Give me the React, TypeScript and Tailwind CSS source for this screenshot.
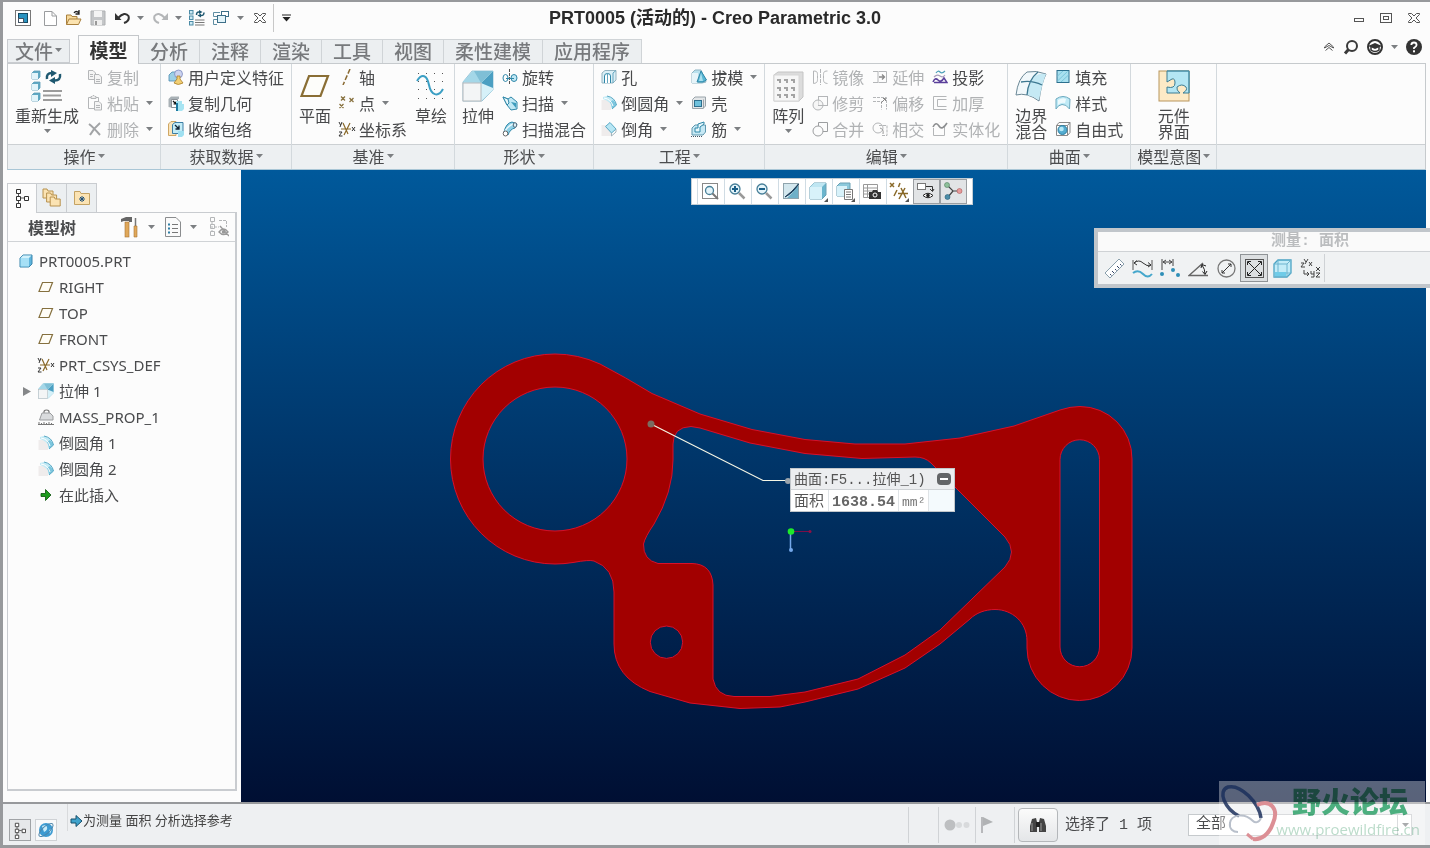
import React from "react";
import type { ReactNode } from "react";

/* ---------- primitives ---------- */

function Ico({ w = 16, h, box, children }: { w?: number; h?: number; box?: string; children: ReactNode }) {
  const height = h ?? w;
  return (
    <svg width={w} height={height} viewBox={box ?? `0 0 ${w} ${height}`} fill="none" className="shrink-0" aria-hidden="true">
      {children}
    </svg>
  );
}

function Caret({ dark = false }: { dark?: boolean }) {
  return (
    <Ico w={7} h={4}>
      <path d="M0 0H7L3.5 4Z" fill={dark ? "#222" : "#7c7f82"} />
    </Ico>
  );
}

/* ---------- icons ---------- */

const g = "#b4b6b8";
const teal = "#2f87a8";
const sky = "#bfe8f5";

const CopyIcon = (
  <Ico>
    <path d="M1.500 1.500H6L8.500 4V10.500H1.500Z" fill="#f4f4f4" stroke={g} />
    <path d="M7.500 5.500H12L14.500 8V14.500H7.500Z" fill="#f4f4f4" stroke={g} />
    <path d="M3 5.500H6M3 7.500H6M9 10.500H13M9 12.500H13" stroke={g} />
  </Ico>
);
const PasteIcon = (
  <Ico>
    <path d="M4 2.500H1.500V13.500H7M9 2.500H11.500V6" stroke={g} />
    <path d="M4 3.500V1.500H5L6 0.500H7L8 1.500H9V3.500Z" fill="#eee" stroke={g} />
    <path d="M7.500 6.500H12L14.500 9V15H7.500Z" fill="#f4f4f4" stroke={g} />
    <path d="M9 10.500H13M9 12.500H13" stroke={g} />
  </Ico>
);
const DeleteIcon = (
  <Ico>
    <path d="M2 3Q6 6 13 14M13 2Q7 7 3 14" stroke="#a2a4a6" strokeWidth="2" />
  </Ico>
);
const UserFeatureIcon = (
  <Ico>
    <path d="M1 6L4 3H10V10L7 12H1Z" fill="#9cd0e6" stroke="#4b8bb0" strokeWidth="0.8" />
    <circle cx="10.500" cy="5" r="4" fill="#ccd3ef" stroke="#7d8cc0" strokeWidth="0.8" />
    <path d="M9 7H12V10L15 14Q10 17 6 14L9 10Z" fill="#f2cf74" stroke="#a97f2a" strokeWidth="0.8" />
  </Ico>
);
const CopyGeomIcon = (
  <Ico>
    <path d="M0.500 4L3 1.500H11V4H5V13L0.500 12Z" fill="#a9b1b6" />
    <path d="M3.500 4.500H9.500V12.500H3.500Z" fill="#fff" stroke="#8b9196" />
    <path d="M5 6L8 9M8 6.500V9H5.500" stroke="#111" strokeWidth="1.200" />
    <path d="M8 6H14V9H16V14L14 16H8Z" fill="#a7e4f2" />
    <path d="M8 8H10V16H8Z" fill="#1e7aa0" />
  </Ico>
);
const ShrinkwrapIcon = (
  <Ico>
    <path d="M0.500 3L3 0.500H8V14.500H0.500Z" fill="#f9e4bb" stroke="#cfa764" />
    <path d="M4.500 3.500L7 1.500H15V10L12.500 12.500H4.500Z" fill="#c3ecf7" stroke="#3c7fa5" />
    <path d="M7 4L11 8M11 4.500V8H7.500" stroke="#123" strokeWidth="1.300" />
    <path d="M10 10H16V14L14 16H10Z" fill="#9fe0f1" />
  </Ico>
);
const AxisIcon = (
  <Ico>
    <path d="M11 0L4 16" stroke="#8a6a33" strokeWidth="1.500" strokeDasharray="5 2" />
  </Ico>
);
const PointIcon = (
  <Ico>
    <path d="M2 1.500L6 5.500M6 1.500L2 5.500M10.500 3L14.500 7M14.500 3L10.500 7M0.500 9L4.500 13M4.500 9L0.500 13" stroke="#8a7442" strokeWidth="1.300" />
  </Ico>
);
const CsysIcon = (
  <Ico w={18} h={16}>
    <path d="M5 2L10 13M12 2L6 14M3 8H13" stroke="#8a6a2a" strokeWidth="1.200" />
    <path d="M1 1L2.500 4M4 1L2 6M1 11H4L1 15H4.500M14 6L17 10M17 6L14 10" stroke="#333" />
  </Ico>
);
const RevolveIcon = (
  <Ico>
    <ellipse cx="3.500" cy="9" rx="2.500" ry="3.500" stroke={teal} />
    <ellipse cx="12" cy="9" rx="3" ry="3.500" fill={sky} stroke={teal} />
    <path d="M7.500 0V16" stroke="#555" strokeDasharray="3 1" />
    <path d="M4 9.500H12" stroke={teal} />
  </Ico>
);
const SweepIcon = (
  <Ico>
    <path d="M1 2L6 4L9 2L15 7V14L9 15L5 10Z" fill={sky} stroke={teal} />
    <path d="M1 2L6 4L7 8L5 10Z" fill="#e9f8fc" stroke={teal} />
    <path d="M9 7L14 8V13Z" fill="#3c9cbc" />
  </Ico>
);
const SweptBlendIcon = (
  <Ico>
    <path d="M2 11Q4 2 10 1L15 3L13 7Q8 8 6 14Z" fill="#8fd0e6" stroke={teal} />
    <path d="M3 10Q6 5 11 3" stroke="#e8f8fd" strokeWidth="1.500" />
    <ellipse cx="3.500" cy="12.500" rx="2.300" ry="2.500" fill="#fff" stroke="#666" />
    <ellipse cx="13" cy="4" rx="1.800" ry="2.300" fill="#d9f1f8" stroke="#567" />
  </Ico>
);
const HoleIcon = (
  <Ico>
    <path d="M1 4L4 1.500H15V11L12 14H1Z" fill="#dbeff6" stroke="#94b3c0" />
    <path d="M3.500 14V7Q3.500 4.500 6.500 4.500Q9.500 4.500 9.500 7V14" fill="#fff" stroke={teal} />
    <path d="M6.500 5V14M12 4V14M12 4L15 1.500" stroke="#62a5bf" />
  </Ico>
);
const RoundIcon = (
  <Ico>
    <path d="M0.500 5H8L10 9V15H0.500Z" fill="#efecec" />
    <path d="M2 2L6 1Q14 3 15.500 10L11 14Q10 6 2 4Z" fill="#c2eaf5" />
    <path d="M12 5Q15 8 15.500 10L11 14Q11 10 9 7Z" fill="#7cc6de" />
    <path d="M6 1Q14 2.500 15.500 10L11 14" stroke="#5aa9c5" />
    <path d="M3 3Q10 4 12 11" stroke="#fff" />
  </Ico>
);
const ChamferIcon = (
  <Ico>
    <path d="M0.500 4H7L10 9V15H0.500Z" fill="#efecec" />
    <path d="M4.500 5.500L9 1.500L15 8L10.500 12Z" fill="#b7e6f4" stroke="#5aa9c5" />
    <path d="M10.500 12V15L15 11V8" stroke="#a3b4bc" />
  </Ico>
);
const DraftIcon = (
  <Ico>
    <path d="M1 4L4 1H10L15 13L11 14H1Z" fill="#b9e1ee" stroke="#8fb5c4" />
    <path d="M1 4H7V14H1Z" fill="#e6f4f9" />
    <path d="M10 2L6 13H12L15.500 11Z" fill="#59b6d3" stroke={teal} />
    <path d="M10 4L8 12H12Z" fill="#a9e0ef" />
  </Ico>
);
const ShellIcon = (
  <Ico>
    <path d="M1.500 4.500L4 2H14.500V11L12 13.500H1.500Z" fill="#e3e6e8" stroke="#9aa4aa" />
    <rect x="3.500" y="5.500" width="7" height="6" fill="#6fc1dc" stroke="#2e6f8e" />
    <path d="M12.500 4.500V13.500" stroke="#9aa4aa" />
  </Ico>
);
const RibIcon = (
  <Ico>
    <path d="M1 7L4 4H14.500V11L12 14H1Z" fill="#c6e8f4" stroke="#5f97ae" />
    <path d="M4 7V11H9V6L13 3V1L7 3V7Z" fill="#e6f7fc" stroke={teal} />
    <path d="M0 15.500H12" stroke="#456" strokeDasharray="1 1" />
  </Ico>
);
const MirrorIcon = (
  <Ico>
    <path d="M8.500 0V16" stroke={g} strokeDasharray="4 1" />
    <path d="M1.500 2C6 2 5.500 4 5.500 8S6 14 1.500 14.500ZM15.500 2C11 2 11.500 4 11.500 8S11 14 15.500 14.500" stroke={g} />
  </Ico>
);
const ExtendIcon = (
  <Ico>
    <path d="M1 2.500H6V13.500H1M6.500 2.500H14.500V13.500H6.500" stroke={g} />
    <path d="M7 8H12M10 5.500L12.500 8L10 10.500" stroke="#888" strokeWidth="1.300" />
  </Ico>
);
const ProjectIcon = (
  <Ico>
    <path d="M4 4Q6 1 8 3T13 2" stroke="#4d9fb8" strokeWidth="1.200" />
    <path d="M2 8Q5 5 8 7T13 6" stroke="#a79dbb" strokeWidth="1.200" />
    <path d="M1 13Q3 8 6 11T12 9L15 13.500H2" stroke="#5a3f9a" strokeWidth="1.500" />
  </Ico>
);
const TrimIcon = (
  <Ico>
    <rect x="6.500" y="1.500" width="9" height="9" stroke={g} />
    <circle cx="6" cy="10" r="5" stroke={g} fill="#f2f2f2" fillOpacity="0.6" />
    <path d="M6 10.500H11" stroke={g} />
  </Ico>
);
const MergeIcon = (
  <Ico>
    <path d="M6.500 5V1.500H15.500V10.500H11" stroke="#9c9ea0" />
    <circle cx="6" cy="10" r="5" stroke="#9c9ea0" />
  </Ico>
);
const OffsetIcon = (
  <Ico>
    <path d="M1 2.500H14.500V14.500M1 6.500H9.500V14.500" stroke={g} strokeDasharray="3 1" />
    <path d="M9 8L13 4M11 3.500H13.500V6" stroke="#888" />
  </Ico>
);
const ThickenIcon = (
  <Ico>
    <path d="M14.500 1.500H1.500V14.500H14.500M14.500 4.500H5.500V11.500H14.500" stroke={g} />
  </Ico>
);
const IntersectIcon = (
  <Ico>
    <circle cx="6" cy="7" r="5" stroke={g} />
    <path d="M7 4.500H15V14.500H10" stroke={g} strokeDasharray="3 1" />
    <path d="M8 7Q12 8 11 13" stroke="#999" />
  </Ico>
);
const SolidifyIcon = (
  <Ico>
    <path d="M1.500 7V14.500H12.500V6" stroke={g} />
    <path d="M1 6Q4 0 7 5T15 2" stroke="#8c8e90" strokeWidth="1.600" />
  </Ico>
);
const FillIcon = (
  <Ico>
    <rect x="2" y="1.500" width="12" height="12" fill="#a8e0ef" stroke="#2b6f8e" />
    <path d="M2.500 7L8 2M2.500 12L12.500 2.500M6 13L13.500 6" stroke="#7bc6dc" />
  </Ico>
);
const StyleIcon = (
  <Ico>
    <path d="M1 4Q8 -1 15 4L14.500 14Q11 9 7 9.500Q3 10 1 14Z" fill="#bfeaf6" stroke="#6aa9bf" />
    <path d="M3 5Q8 2 11 4L10 8Q6 7 3 10Z" fill="#edfafd" />
  </Ico>
);
const FreestyleIcon = (
  <Ico>
    <path d="M1.500 4.500L4 1.500H15V11.500L12.500 14.500H1.500ZM1.500 4.500H12.500V14.500M12.500 4.500L15 1.500" stroke="#888" />
    <circle cx="7.500" cy="9" r="4.500" fill="#54acd0" stroke="#2b7fa2" />
    <circle cx="6.500" cy="8" r="2.300" fill="#b6e8f6" />
  </Ico>
);
const RegenIcon = (
  <Ico w={32}>
    {[1, 12, 23].map((y) => (
      <g key={y}>
        <path d={`M1 ${y + 2}L3 ${y}H9V${y + 6}L7 ${y + 8}H1Z`} fill="#5fa9c4" stroke="#5b9cb6" strokeWidth="0.8" />
        <path d={`M1 ${y + 2}H7V${y + 8}H1Z`} fill="#e2f4fa" />
      </g>
    ))}
    <path d="M16 9Q15 3 21 3" stroke="#1e5870" strokeWidth="2.500" />
    <path d="M20 0L26 3L20 7Z" fill="#1e5870" />
    <path d="M29 4Q30 11 23 10.500" stroke="#1e5870" strokeWidth="2.500" />
    <path d="M24 7L18 10.500L24 14Z" fill="#1e5870" />
    <path d="M12 21H31M12 25.500H30M12 30H31" stroke="#9b9b9b" strokeWidth="2" />
  </Ico>
);
const PlaneIcon = (
  <Ico w={32}>
    <path d="M10 6H29L21.500 26H2.500Z" stroke="#8a6e35" strokeWidth="2.200" fill="#fdfdfa" />
  </Ico>
);
const SketchIcon = (
  <Ico w={32}>
    {[3, 11, 19, 28].map((y) =>
      [3, 11, 19, 27].map((x) => <rect key={`${x}-${y}`} x={x} y={y} width="1" height="1" fill="#555" />),
    )}
    <path d="M2 11C7 3 12 5 14 15S23 28 28 19" stroke="#3b9fc4" strokeWidth="2" />
  </Ico>
);
const extrudeArt = (
  <>
    <path d="M1 12L10 1H31V20L20 31H1Z" fill="#bfe3f0" stroke="#8abdd0" strokeWidth="0.8" />
    <path d="M19 13L31 1V20L19 31Z" fill="#d6f1f9" />
    <path d="M31 1V18L19 13Z" fill="#4b9fc2" />
    <path d="M1 12L11 1H31L19 13Z" fill="#a4d7e8" />
    <path d="M12 1H31L19 13Z" fill="#7fbfd6" />
    <rect x="1" y="13" width="18" height="18" fill="#f3f5f6" stroke="#b3b8bb" />
  </>
);
const ExtrudeIcon = <Ico w={32}>{extrudeArt}</Ico>;
const ExtrudeSmall = (
  <Ico w={16} box="0 0 32 32">
    {extrudeArt}
  </Ico>
);
const PatternIcon = (
  <Ico w={32}>
    <path d="M2 5L6 2H31V27L27 31H2Z" fill="#dcdcdc" stroke="#c4c4c4" />
    <rect x="2" y="5" width="25" height="26" fill="#f6f6f6" stroke="#d6d6d6" />
    {[9, 17, 24].map((y) =>
      [5, 12, 19].map((x) => <path key={`${x}-${y}`} d={`M${x} ${y}h4v4h-2v-2h-2z`} fill="#a3a3a3" />),
    )}
  </Ico>
);
const BoundaryIcon = (
  <Ico w={32}>
    <path d="M12 2Q21 0 31 4Q26 14 24 31Q12 22 1 25Q3 8 12 2Z" fill="#f1f8fb" stroke="#6b8896" />
    <path d="M20 6Q25 3 31 4Q27 14 24 30Q18 26 12 25Q14 17 15 12Z" fill="#c5e9f4" />
    <path d="M23 2Q13 10 12 25M6 12Q17 10 27 15" stroke="#3c7790" strokeWidth="1.300" />
  </Ico>
);
const ComponentUiIcon = (
  <Ico w={32}>
    <rect x="1" y="1" width="30" height="30" fill="#fdeac6" stroke="#b8955c" />
    <path d="M9 1H31V23H25Q30 20 28 17Q24 13 19 17Q18 20 22 23H9V17Q17 19 17 13Q17 8 14 9L9 12V8Z" fill="#b4e6f3" stroke="#3c7c92" />
    <path d="M9 1H31V23" stroke="#4a94ad" />
  </Ico>
);

/* ---------- ribbon ---------- */

type Item = { icon: ReactNode; label: string; off?: boolean; drop?: boolean };

function SmallButton({ icon, label, off, drop }: Item) {
  return (
    <button type="button" disabled={off} className={`flex h-[26px] items-center gap-1 whitespace-nowrap ${off ? "text-[#b0b2b4]" : "text-[#48494b]"}`}>
      <span className="flex w-4 justify-center">{icon}</span>
      <span>{label}</span>
      {drop && (
        <span className="ml-[3px] flex">
          <Caret />
        </span>
      )}
    </button>
  );
}

function Column({ items }: { items: Item[] }) {
  return (
    <div className="flex flex-col items-start">
      {items.map((i) => (
        <SmallButton key={i.label} {...i} />
      ))}
    </div>
  );
}

function BigButton({ icon, lines, drop }: { icon: ReactNode; lines: string[]; drop?: boolean }) {
  return (
    <button type="button" className="flex flex-col items-center self-start pt-[6px] leading-4 whitespace-nowrap text-[#48494b]">
      {icon}
      <span className="mt-[5px] flex flex-col">
        {lines.map((l) => (
          <span key={l}>{l}</span>
        ))}
      </span>
      {drop && (
        <span className="mt-[6px]">
          <Caret />
        </span>
      )}
    </button>
  );
}

function Group({ label, children }: { label: string; children: ReactNode }) {
  return (
    <section className="flex flex-col border-r border-[#d3d9dd]">
      <div className="flex h-20 justify-center gap-2 px-[7px]">{children}</div>
      <button type="button" className="flex h-[25px] items-center justify-center gap-[2px] border-t border-[#ccd0d3] bg-[#edf0f2] px-[6px] pb-[2px] whitespace-nowrap text-[#4c4d4f]">
        {label}
        <Caret />
      </button>
    </section>
  );
}

const tabs = ["分析", "注释", "渲染", "工具", "视图", "柔性建模", "应用程序"];

function TabBar() {
  return (
    <nav className="flex h-[29px] items-end pl-1 text-[19px] leading-none">
      <button type="button" className="flex h-[24px] w-[63px] items-center justify-center gap-[2px] border border-[#c9ccd0] bg-[#eceff1] pb-[2px] font-medium text-[#77797c]">
        文件
        <Caret />
      </button>
      <button type="button" className="relative -mb-px ml-2 h-[29px] w-[61px] border border-b-0 border-[#c4c7ca] bg-[#fcfcfc] pb-[2px] font-bold text-[#333]">
        模型
      </button>
      {tabs.map((t) => (
        <button key={t} type="button" className="h-[24px] border-t border-r border-[#d0d4d7] bg-[#eceff1] px-[11px] pb-[2px] font-medium whitespace-nowrap text-[#77797c]">
          {t}
        </button>
      ))}
      <div className="ml-auto flex h-full items-center gap-2 pr-2 pb-1">
        <button type="button" aria-label="最小化功能区">
          <Ico w={12} h={10}>
            <path d="M1.500 5L6 1L10.500 5V6L6 3.500L1.500 6ZM2.500 8.500L6 5.500L9.500 8.500" stroke="#555" />
          </Ico>
        </button>
        <button type="button" aria-label="搜索">
          <Ico w={16}>
            <circle cx="9" cy="7" r="5" stroke="#3a3a3a" strokeWidth="2" />
            <path d="M5.500 10.500L2 14.500" stroke="#3a3a3a" strokeWidth="3" />
          </Ico>
        </button>
        <button type="button" aria-label="学习" className="flex items-center gap-2">
          <Ico w={16}>
            <circle cx="8" cy="8" r="7" fill="#fff" stroke="#333" strokeWidth="2" />
            <path d="M1 7L8 4L15 7L8 10Z" fill="#333" />
            <path d="M4 8V11Q8 14 12 11V8" stroke="#333" strokeWidth="1.500" />
          </Ico>
          <Caret />
        </button>
        <button type="button" aria-label="帮助">
          <Ico w={16}>
            <circle cx="8" cy="8" r="8" fill="#333" />
            <path d="M5.300 6Q5.500 3.500 8 3.500T10.600 6Q10.600 7.300 8 9V10" stroke="#fff" strokeWidth="1.800" />
            <rect x="7" y="11.300" width="2" height="2" fill="#fff" />
          </Ico>
        </button>
      </div>
    </nav>
  );
}

function TitleBar() {
  return (
    <header className="grid h-8 grid-cols-[1fr_auto_1fr] items-center">
      <div className="flex items-center pl-3">
        <button type="button" aria-label="窗口">
          <Ico w={16}>
            <rect x="0.500" y="0.500" width="15" height="15" fill="#fff" stroke="#777" />
            <rect x="3.500" y="3.500" width="9" height="9" fill="#2a93c0" stroke="#164a63" />
            <rect x="3.500" y="8.500" width="5" height="4" fill="#fff" stroke="#456" />
          </Ico>
        </button>
        <button type="button" aria-label="新建" className="ml-3">
          <Ico w={15} h={17}>
            <path d="M1.500 1.500H9L13.500 6V15.500H1.500Z" fill="#fff" stroke="#9a9c9e" />
            <path d="M9 1.500V6H13.500" stroke="#9a9c9e" />
          </Ico>
        </button>
        <button type="button" aria-label="打开" className="ml-[7px]">
          <Ico w={17} h={16}>
            <path d="M1.500 14.500V5H6L7 6.500H12V9" fill="#f7d99b" stroke="#a9803d" />
            <path d="M1.500 14.500L4 9H16L13.500 14.500Z" fill="#fbe3b0" stroke="#a9803d" />
            <path d="M9 3Q11 0 14 3M14 0V4H10.500" stroke="#222" strokeWidth="1.300" />
          </Ico>
        </button>
        <button type="button" aria-label="保存" className="ml-2" disabled>
          <Ico w={16}>
            <path d="M1 1H15V15H1Z" fill="#c4c6c8" stroke="#aeb0b2" />
            <rect x="4" y="1" width="8" height="6" fill="#f4f4f4" />
            <rect x="4" y="10" width="8" height="5" fill="#eee" />
            <rect x="5" y="11" width="2" height="4" fill="#999" />
          </Ico>
        </button>
        <button type="button" aria-label="撤销" className="ml-2 flex items-center gap-[6px]">
          <Ico w={17} h={14}>
            <path d="M4 7Q11 0 14.500 5Q16 10 10 12" stroke="#333" strokeWidth="2" />
            <path d="M1 2V9H7.500Z" fill="#333" />
          </Ico>
          <Caret />
        </button>
        <button type="button" aria-label="重做" className="ml-2 flex items-center gap-[6px]" disabled>
          <Ico w={17} h={14}>
            <path d="M13 7Q6 0 2.500 5Q1 10 7 12" stroke="#b4b6b8" strokeWidth="2" />
            <path d="M16 2V9H9.500Z" fill="#b4b6b8" />
          </Ico>
          <Caret />
        </button>
        <button type="button" aria-label="重新生成" className="ml-[7px]">
          <Ico w={16} box="0 0 32 32">
            {[1, 12, 23].map((y) => (
              <rect key={y} x="1" y={y} width="7" height="7" fill="#cdeaf4" stroke="#4b8ba6" strokeWidth="2" />
            ))}
            <path d="M15 10Q15 3 21 4M30 5Q30 12 23 11" stroke="#1e5870" strokeWidth="3" />
            <path d="M20 0L27 4L20 8ZM24 7L17 11L24 15Z" fill="#1e5870" />
            <path d="M12 20H31M12 25H31M12 30H31" stroke="#777" strokeWidth="2" />
          </Ico>
        </button>
        <button type="button" aria-label="窗口切换" className="ml-2 flex items-center gap-[8px]">
          <Ico w={16} h={15}>
            <path d="M7 1.500H0.500V5.500H5M4 13.500H0.500V8.500H4" stroke="#5e8ea3" />
            <rect x="8.500" y="0.500" width="7" height="5" fill="#fff" stroke="#3d6f88" />
            <rect x="4.500" y="4.500" width="8" height="7" fill="#e3f4fa" stroke="#3d6f88" />
          </Ico>
          <Caret />
        </button>
        <button type="button" aria-label="关闭" className="ml-[10px]">
          <CloseGlyph />
        </button>
        <span className="ml-[7px] h-7 w-px bg-[#c8c8c8]" />
        <button type="button" aria-label="自定义" className="ml-2">
          <Ico w={9} h={8}>
            <path d="M0 1H9" stroke="#222" />
            <path d="M0.500 3H8.500L4.500 7.500Z" fill="#222" />
          </Ico>
        </button>
      </div>
      <h1 className="pr-[3px] font-['Liberation_Sans','Noto_Sans_CJK_SC',sans-serif] text-[18px] leading-none font-bold text-[#2a2a2a]">
        PRT0005 (活动的) - Creo Parametric 3.0
      </h1>
      <div className="flex items-center justify-end gap-4 pr-[10px]">
        <button type="button" aria-label="最小化">
          <Ico w={10}>
            <rect x="0.500" y="5.500" width="9" height="3" stroke="#555" />
          </Ico>
        </button>
        <button type="button" aria-label="还原">
          <Ico w={12} h={10}>
            <rect x="0.500" y="0.500" width="11" height="9" stroke="#555" />
            <rect x="3.500" y="3.500" width="5" height="3" stroke="#555" />
          </Ico>
        </button>
        <button type="button" aria-label="关闭窗口">
          <CloseGlyph />
        </button>
      </div>
    </header>
  );
}

function CloseGlyph() {
  return (
    <Ico w={12} h={10}>
      <path d="M0.500 0.500H3.500L6 3L8.500 0.500H11.500V1.500L8 5L11.500 8.500V9.500H8.500L6 7L3.500 9.500H0.500V8.500L4 5L0.500 1.500Z" stroke="#555" />
    </Ico>
  );
}

function Ribbon() {
  return (
    <div className="mr-1 ml-1 flex border border-b-[#a9c6d6] border-[#c6cacd] text-[16px] leading-none">
      <Group label="操作">
        <BigButton icon={RegenIcon} lines={["重新生成"]} drop />
        <Column
          items={[
            { icon: CopyIcon, label: "复制", off: true },
            { icon: PasteIcon, label: "粘贴", off: true, drop: true },
            { icon: DeleteIcon, label: "删除", off: true, drop: true },
          ]}
        />
      </Group>
      <Group label="获取数据">
        <Column
          items={[
            { icon: UserFeatureIcon, label: "用户定义特征" },
            { icon: CopyGeomIcon, label: "复制几何" },
            { icon: ShrinkwrapIcon, label: "收缩包络" },
          ]}
        />
      </Group>
      <Group label="基准">
        <BigButton icon={PlaneIcon} lines={["平面"]} />
        <Column
          items={[
            { icon: AxisIcon, label: "轴" },
            { icon: PointIcon, label: "点", drop: true },
            { icon: CsysIcon, label: "坐标系" },
          ]}
        />
        <BigButton icon={SketchIcon} lines={["草绘"]} />
      </Group>
      <Group label="形状">
        <BigButton icon={ExtrudeIcon} lines={["拉伸"]} />
        <Column
          items={[
            { icon: RevolveIcon, label: "旋转" },
            { icon: SweepIcon, label: "扫描", drop: true },
            { icon: SweptBlendIcon, label: "扫描混合" },
          ]}
        />
      </Group>
      <Group label="工程">
        <Column
          items={[
            { icon: HoleIcon, label: "孔" },
            { icon: RoundIcon, label: "倒圆角", drop: true },
            { icon: ChamferIcon, label: "倒角", drop: true },
          ]}
        />
        <Column
          items={[
            { icon: DraftIcon, label: "拔模", drop: true },
            { icon: ShellIcon, label: "壳" },
            { icon: RibIcon, label: "筋", drop: true },
          ]}
        />
      </Group>
      <Group label="编辑">
        <BigButton icon={PatternIcon} lines={["阵列"]} drop />
        <Column
          items={[
            { icon: MirrorIcon, label: "镜像", off: true },
            { icon: TrimIcon, label: "修剪", off: true },
            { icon: MergeIcon, label: "合并", off: true },
          ]}
        />
        <Column
          items={[
            { icon: ExtendIcon, label: "延伸", off: true },
            { icon: OffsetIcon, label: "偏移", off: true },
            { icon: IntersectIcon, label: "相交", off: true },
          ]}
        />
        <Column
          items={[
            { icon: ProjectIcon, label: "投影" },
            { icon: ThickenIcon, label: "加厚", off: true },
            { icon: SolidifyIcon, label: "实体化", off: true },
          ]}
        />
      </Group>
      <Group label="曲面">
        <BigButton icon={BoundaryIcon} lines={["边界", "混合"]} />
        <Column
          items={[
            { icon: FillIcon, label: "填充" },
            { icon: StyleIcon, label: "样式" },
            { icon: FreestyleIcon, label: "自由式" },
          ]}
        />
      </Group>
      <Group label="模型意图">
        <BigButton icon={ComponentUiIcon} lines={["元件", "界面"]} />
      </Group>
      <div className="flex flex-1 flex-col justify-end">
        <div className="h-[25px] border-t border-[#ccd0d3] bg-[#edf0f2]" />
      </div>
    </div>
  );
}

/* ---------- model tree ---------- */

const PlaneSmall = (
  <Ico w={16}>
    <path d="M4.500 3.500H14.500L11 12.500H1Z" stroke="#85703f" strokeWidth="1.200" fill="#fffdf6" />
  </Ico>
);
const PartIcon = (
  <Ico w={14}>
    <path d="M1 4L4 1H13V10L10 13H1Z" fill="#5fb4dc" stroke="#3b86ad" />
    <path d="M1.500 4H10V12.500H1.500Z" fill="#a6e0f6" />
    <path d="M1.500 4L4 1.500H12.500L10 4Z" fill="#d2f1fb" />
  </Ico>
);
const MassIcon = (
  <Ico w={16}>
    <path d="M6 4Q5.500 1 8.500 1T11 4" stroke="#777" strokeWidth="1.200" />
    <path d="M4 4H12L15 7V11H1.500Z" fill="#d9dbdd" stroke="#9a9c9e" />
    <path d="M1 15.500V13M3.500 15.500V14M6 15.500V13M8.500 15.500V14M11 15.500V13M13.500 15.500V14M0 15.500H16" stroke="#777" />
  </Ico>
);
const InsertIcon = (
  <Ico w={16}>
    <path d="M3 6.500H7.500V2.500L13 8L7.500 13.500V9.500H3Z" fill="#1d9b1d" stroke="#0d520d" strokeWidth="0.800" />
  </Ico>
);

const tree: { icon: ReactNode; label: string; open?: boolean }[] = [
  { icon: PlaneSmall, label: "RIGHT" },
  { icon: PlaneSmall, label: "TOP" },
  { icon: PlaneSmall, label: "FRONT" },
  { icon: CsysIcon, label: "PRT_CSYS_DEF" },
  { icon: ExtrudeSmall, label: "拉伸 1", open: true },
  { icon: MassIcon, label: "MASS_PROP_1" },
  { icon: RoundIcon, label: "倒圆角 1" },
  { icon: RoundIcon, label: "倒圆角 2" },
  { icon: InsertIcon, label: "在此插入" },
];

function TreeGlyph({ w = 14, h = 20 }: { w?: number; h?: number }) {
  return (
    <Ico w={w} h={h} box="0 0 14 20">
      <path d="M3.500 5V16M6 10H9" stroke="#555" />
      <path d="M1.500 1.500H5.500V5.500H1.500ZM1.500 8.500H5.500V12.500H1.500ZM1.500 15.500H5.500V19.500H1.500ZM9.500 8.500H13.500V12.500H9.500Z" fill="#fff" stroke="#333" />
    </Ico>
  );
}

function Sidebar() {
  return (
    <aside className="flex w-[238px] shrink-0 flex-col bg-[#fcfcfc] pt-[13px] pr-1 pb-[11px] pl-1">
      <div className="flex">
        <button type="button" aria-label="模型树" className="relative -mb-px flex h-[30px] w-[30px] items-center justify-center border border-b-0 border-[#c9ccd0] bg-[#fcfcfc] pb-[2px]">
          <TreeGlyph />
        </button>
        <button type="button" aria-label="文件夹浏览器" className="flex h-[29px] w-[30px] items-center justify-center border-t border-r border-[#c9ccd0] bg-[#eceff1]">
          <Ico w={20}>
            {[0, 4, 8].map((o) => (
              <path key={o} d={`M${o * 0.9 + 1} ${o + 10}V${o + 1}H${o * 0.9 + 5}L${o * 0.9 + 6} ${o + 3}H${o * 0.9 + 11}V${o + 10}Z`} fill="#fbe3b3" stroke="#b8924f" />
            ))}
          </Ico>
        </button>
        <button type="button" aria-label="收藏夹" className="flex h-[29px] w-[30px] items-center justify-center border-t border-r border-[#c9ccd0] bg-[#eceff1]">
          <Ico w={18} h={16}>
            <path d="M1.500 14.500V1.500H7L8 3.500H16.500V14.500Z" fill="#fbe3b3" stroke="#c4a263" />
            <path d="M9 6V12M6 9H12M7 7L11 11M11 7L7 11" stroke="#1e4f78" />
          </Ico>
        </button>
      </div>
      <div className="flex flex-1 flex-col border border-r-2 border-b-2 border-[#c9ccd0]">
        <div className="flex h-[29px] items-center border-b border-[#d0d3d6] pr-[6px] pl-5 text-[16px] text-[#4a4b4d]">
          <h2 className="text-[16px] leading-none font-bold">模型树</h2>
          <button type="button" aria-label="设置" className="ml-auto flex items-center gap-[9px]">
            <Ico w={18} h={21}>
              <path d="M0 2L5 0H11V5H8V4H3L0 5Z" fill="#666" />
              <rect x="4" y="5" width="4" height="15" fill="#e0a85a" stroke="#a87434" strokeWidth="0.600" />
              <path d="M14.500 1V9" stroke="#777" strokeWidth="1.500" />
              <path d="M13 9H16V20H13Z" fill="#e0a85a" stroke="#a87434" strokeWidth="0.600" />
            </Ico>
            <Caret />
          </button>
          <button type="button" aria-label="显示" className="ml-[10px] flex items-center gap-[9px]">
            <Ico w={16} h={20}>
              <path d="M0.500 0.500H11L15.500 5V19.500H0.500Z" fill="#fafafa" stroke="#8a8c8e" />
              <path d="M7 7.500H13M7 11.500H13M7 15.500H13" stroke="#777" />
              <path d="M3 7.500H5M3 11.500H5M3 15.500H5" stroke="#2f7fa5" strokeWidth="2" />
            </Ico>
            <Caret />
          </button>
          <button type="button" aria-label="隐藏" className="ml-3" disabled>
            <Ico w={20}>
              <path d="M3 5V15M5 10H10M10 3.500H17.500V10" stroke={g} strokeDasharray="3 1" />
              <path d="M1.500 0.500H5.500V4.500H1.500ZM1.500 7.500H5.500V11.500H1.500ZM1.500 14.500H5.500V18.500H1.500Z" stroke={g} />
              <path d="M10 15Q14.500 9 19 15Q14.500 20 10 15ZM11 9L20 19" stroke="#999" strokeWidth="1.300" />
              <circle cx="14.500" cy="15" r="1.800" fill="#999" />
            </Ico>
          </button>
        </div>
        <ul className="pt-[6px] font-['Noto_Sans','Noto_Sans_CJK_SC',sans-serif] text-[15px] leading-[26px] text-[#4a4b4d]">
          <li className="flex h-[26px] items-center gap-[6px] pl-[11px]">
            {PartIcon}
            PRT0005.PRT
          </li>
          {tree.map((n) => (
            <li key={n.label} className="flex h-[26px] items-center pl-[15px]">
              <span className="flex w-[15px] items-center">
                {n.open && (
                  <Ico w={8} h={9}>
                    <path d="M0 0L8 4.500L0 9Z" fill="#858789" />
                  </Ico>
                )}
              </span>
              <span className="mr-[5px] flex w-4 justify-center">{n.icon}</span>
              {n.label}
            </li>
          ))}
        </ul>
      </div>
    </aside>
  );
}

/* ---------- graphics area ---------- */

const corner = <path d="M20 21V17L16 21Z" fill="#555" />;
const viewTools: { label: string; art: ReactNode; on?: boolean }[] = [
  {
    label: "重新调整",
    art: (
      <>
        <rect x="2.500" y="2.500" width="15" height="15" fill="#fff" stroke="#888" />
        <circle cx="9.500" cy="9.500" r="4" fill="#e4f4fa" stroke="#477f98" strokeWidth="1.300" />
        <path d="M12.500 12.500L18 18" stroke="#777" strokeWidth="2" />
      </>
    ),
  },
  {
    label: "放大",
    art: (
      <>
        <circle cx="8" cy="8" r="5" fill="#e4f4fa" stroke="#477f98" strokeWidth="1.300" />
        <path d="M5 8H11M8 5V11" stroke="#1a5f88" strokeWidth="2" />
        <path d="M12 12L17.500 17.500" stroke="#999" strokeWidth="2.500" />
      </>
    ),
  },
  {
    label: "缩小",
    art: (
      <>
        <circle cx="8" cy="8" r="5" fill="#e4f4fa" stroke="#477f98" strokeWidth="1.300" />
        <path d="M5 8H11" stroke="#1a5f88" strokeWidth="2" />
        <path d="M12 12L17.500 17.500" stroke="#999" strokeWidth="2.500" />
      </>
    ),
  },
  {
    label: "重画",
    art: (
      <>
        <rect x="2.500" y="2.500" width="15" height="15" fill="#d3e7ee" stroke="#8fa4ad" />
        <path d="M17 4V17H6L11 12Z" fill="#6fb0c8" />
        <path d="M17.500 3Q12 12 4 16Q11 11 17.500 3Z" fill="#1c3f5c" stroke="#1c3f5c" />
      </>
    ),
  },
  {
    label: "显示样式",
    art: (
      <>
        <path d="M2 6L6 2H18V14L14 18H2Z" fill="#6bb5cd" stroke="#6aa1b5" />
        <path d="M2 6H14V18H2Z" fill="#d8f2fa" />
        <path d="M2 6L6 2H18L14 6Z" fill="#bfe6f2" />
        {corner}
      </>
    ),
  },
  {
    label: "已保存方向",
    art: (
      <>
        <path d="M2 5L5 2H15V12L12 15H2Z" fill="#8cc9dc" stroke="#6aa1b5" />
        <path d="M2 5H12V15H2Z" fill="#d8f2fa" />
        <path d="M9.500 8.500H17.500V18.500H9.500Z" fill="#fff" stroke="#777" />
        <path d="M11 11H16M11 13.500H16M11 16H16" stroke="#777" />
        {corner}
      </>
    ),
  },
  {
    label: "视图管理器",
    art: (
      <>
        <path d="M1.500 3.500H15.500V16.500H1.500ZM1.500 7H15.500M1.500 10H15.500M1.500 13H15.500M5.500 3.500V16.500" fill="#fff" stroke="#999" />
        <path d="M7 11H10L11 9H15L16 11H19V18H7Z" fill="#333" />
        <circle cx="13" cy="14" r="2" fill="#333" stroke="#fff" />
      </>
    ),
  },
  {
    label: "基准显示",
    art: (
      <>
        <path d="M1 2L5 6M5 2L1 6M8 9L5 15M11 2L9.500 6M12 7L17 17M16 7L10 18M9 12.500H19" stroke="#8a6a2a" strokeWidth="1.500" />
        {corner}
      </>
    ),
  },
  {
    label: "注释显示",
    on: true,
    art: (
      <>
        <rect x="1.500" y="2.500" width="8" height="6" fill="#fff" stroke="#777" />
        <path d="M10 5.500H16.500V10M14 8L16.500 10.500L18 8" stroke="#333" />
        <path d="M7 14.500Q12 10 17 14.500Q12 19 7 14.500Z" fill="#fff" stroke="#222" />
        <circle cx="12" cy="14.500" r="1.800" fill="#222" />
      </>
    ),
  },
  {
    label: "旋转中心",
    on: true,
    art: (
      <>
        <path d="M4 4L10 10L16 10M10 10L5 16" stroke="#444" strokeWidth="1.200" />
        <circle cx="4" cy="4" r="2.500" fill="#8fc09b" stroke="#4f8060" strokeWidth="0.600" />
        <circle cx="16.500" cy="10" r="2.500" fill="#e79c9c" stroke="#ad5a5a" strokeWidth="0.600" />
        <circle cx="4.500" cy="16" r="2.500" fill="#4b8da8" stroke="#28607a" strokeWidth="0.600" />
      </>
    ),
  },
];

const measureTools: { label: string; art: ReactNode; on?: boolean }[] = [
  {
    label: "汇总",
    art: (
      <>
        <path d="M1 15L15 1L20 6L6 20Z" fill="#fff" stroke="#8aa0ac" />
        <path d="M7.500 17.500L6 16M10 15L8 13M12.500 12.500L11 11M15 10L13 8M17.500 7.500L16 6" stroke="#346" />
      </>
    ),
  },
  {
    label: "长度",
    art: (
      <>
        <path d="M1 2V12M20 2V12" stroke="#555" />
        <path d="M2 5Q7 1 11 5T19 7M2 5L5 2.500M2 5L5 7M19 7L16 4.500M19 7L16 9" stroke="#333" />
        <path d="M1 15Q6 11 11 16T20 16" stroke="#45a7cc" strokeWidth="2" />
      </>
    ),
  },
  {
    label: "距离",
    art: (
      <>
        <path d="M2 1V12M13 1V8M3 4H12M3 4L6 2M3 4L6 6M12 4L9 2M12 4L9 6" stroke="#444" />
        <circle cx="2" cy="16" r="2" fill="#2f8fb8" />
        <circle cx="13" cy="12" r="2" fill="#2f8fb8" />
        <circle cx="18" cy="17" r="2" fill="#2f8fb8" />
      </>
    ),
  },
  {
    label: "角度",
    art: (
      <>
        <path d="M20 17.500H1L15 5" stroke="#666" strokeWidth="1.500" />
        <path d="M14 7Q17 11 17 16M13 10L14 6.500L18 8M14.500 13.500L17 16.500L19 13" stroke="#222" />
      </>
    ),
  },
  {
    label: "直径",
    art: (
      <>
        <circle cx="10.500" cy="10.500" r="8.500" stroke="#777" strokeWidth="1.300" />
        <path d="M6 15L15 6M6 12V15H9M12 6H15V9" stroke="#333" />
      </>
    ),
  },
  {
    label: "面积",
    on: true,
    art: (
      <>
        <rect x="1.500" y="1.500" width="18" height="18" stroke="#555" />
        <path d="M4 4L17 17M17 4L4 17M3.500 7V3.500H7M14 3.500H17.500V7M17.500 14V17.500H14M7 17.500H3.500V14" stroke="#222" />
      </>
    ),
  },
  {
    label: "体积",
    art: (
      <>
        <path d="M2 6L6 2H19V15L15 19H2Z" fill="#c3ecf8" stroke="#4aa3c4" strokeWidth="1.300" />
        <path d="M2 6H15V19M15 6L19 2M6 2V15H19M6 15L2 19" stroke="#6db4cf" />
        <path d="M3 14H14V18H3Z" fill="#6fcbe8" />
      </>
    ),
  },
  {
    label: "转换",
    art: (
      <path
        d="M4 1L6 4M8 1L5 6M1 5H4L1 9H5M9 4L12 8M12 4L9 8M4 12V16H9M7 14L9 16L7 18M11 13V16H14V13M14 16V19H11M16 9L20 13M20 9L16 13M16 15H20L16 19H20"
        stroke="#444"
      />
    ),
  },
];

function PartDrawing() {
  return (
    <svg width="1185" height="632" viewBox="241 170 1185 632" className="absolute top-0 left-0" role="img" aria-label="PRT0005">
      <path
        fillRule="evenodd"
        fill="#a20000"
        stroke="#d8102a"
        strokeWidth="1"
        d="M555 354Q578 354 600 364Q625 377 652 393.500L700 414L752 429.500L805 439.500L855 444L905 444L960 438L1014 426L1060 410Q1070 406.500 1080 406.500A52 52 0 0 1 1132 459V648A52.500 52.500 0 0 1 1027 648V641C1027 622 1012 609.500 995 609.500C985 609.500 976 613 970 619L940 644L905 668L858 689L805 702L780 707L740 708.500L690 703L650 691.500Q614 677 614 644V592Q614 568 594 561Q589 559.500 573 562.500Q564 564 555 564A104.500 105 0 0 1 450.500 459A104.500 105 0 0 1 555 354Z
        M555 387A72 72 0 1 0 555 531A72 72 0 1 0 555 387Z
        M1060 459.500V647A19.750 19.750 0 0 0 1099.500 647V459.500A19.750 19.750 0 0 0 1060 459.500Z
        M666.500 626A16.200 16.200 0 1 0 666.500 658.400A16.200 16.200 0 1 0 666.500 626Z
        M673 444Q673 427 691 426.500L700 428L750 443L805 453.500L862 458.500L915 457Q925 457 931 463L1005 537Q1018 552 1005 567L940 630L905 655L858 679L805 692L770 696.500H734Q716 696 713 679V585Q712 564 692 563.500H658Q643 560 643.500 544Q645 537 654 524Q673 492 673 460Z"
      />
      <path d="M651 424L763 480.500H788" stroke="#f6f7e6" strokeWidth="1.200" fill="none" />
      <circle cx="651" cy="424" r="3.500" fill="#7b6b60" />
      <circle cx="788" cy="481" r="3" fill="#9aa4ac" />
      <path d="M791 531.500H809" stroke="#7a0f48" />
      <circle cx="810" cy="531.500" r="1.500" fill="#8f1044" />
      <path d="M790.500 531V549" stroke="#74a8ea" strokeWidth="1.500" />
      <circle cx="791" cy="550" r="2" fill="#74a8ea" />
      <circle cx="791" cy="531.500" r="3.300" fill="#1eea2a" />
    </svg>
  );
}

function Viewport() {
  return (
    <main className="relative flex-1 bg-linear-to-b from-[#00599b] to-[#000f33]">
      <PartDrawing />
      <div className="relative flex justify-center pt-2 pr-1">
        <div className="flex h-[27px] items-center border border-[#c3cdd4] bg-white px-[5px]">
          {viewTools.map((t) => (
            <button
              key={t.label}
              type="button"
              aria-label={t.label}
              aria-pressed={!!t.on}
              className={`flex h-full w-[27px] items-center justify-center border-l ${t.on ? "border border-[#9a9ea2] bg-[#e2e4e6]" : "border-[#d0dce4]"}`}
            >
              <Ico w={21}>{t.art}</Ico>
            </button>
          ))}
        </div>
      </div>
      <section aria-label="测量: 面积" className="absolute top-[58px] -right-1 w-[336px] border-4 border-r-0 border-[#c1c6cb] bg-[#f0f2f3]">
        <h2 className="h-5 border-b border-[#cfd2d5] bg-[#fafafa] pl-[92px] text-center font-['Liberation_Mono','Noto_Sans_CJK_SC',monospace] text-[15px] leading-5 font-bold text-[#bbbdbf]">
          测量: 面积
        </h2>
        <div className="flex h-8 items-center px-[2px]">
          {measureTools.map((t) => (
            <button
              key={t.label}
              type="button"
              aria-label={t.label}
              aria-pressed={!!t.on}
              className={`flex h-7 w-7 items-center justify-center ${t.on ? "border border-[#8f9396] bg-[#dcdfe1]" : ""}`}
            >
              <Ico w={21}>{t.art}</Ico>
            </button>
          ))}
          <span className="h-7 w-px bg-[#cfd2d5]" />
        </div>
      </section>
      <div className="absolute top-[298px] left-[549px] w-[165px] border border-[#c2c7cb] bg-white font-['Liberation_Mono','Noto_Sans_CJK_SC',monospace] text-[#555]">
        <div className="flex h-[21px] items-center border-b border-[#cfd3d6] bg-[#eceef0] px-[3px] leading-none whitespace-nowrap">
          <span className="pt-[2px] text-[14px]">曲面:F5...拉伸_1)</span>
          <button type="button" aria-label="收起" className="ml-auto">
            <Ico w={14} h={12}>
              <rect width="14" height="12" rx="4" fill="#636567" />
              <path d="M3 6H11" stroke="#fff" strokeWidth="2" />
            </Ico>
          </button>
        </div>
        <div className="flex h-[21px] items-center pl-[3px] text-[15px] leading-none">
          <span className="flex h-full items-center border-r border-[#dfe3e6] pt-[3px] pr-1">面积</span>
          <strong className="flex h-full items-center border-r border-[#dfe3e6] px-[3px] pt-[3px] text-[#666]">1638.54</strong>
          <span className="flex h-full items-center border-r border-[#dfe3e6] px-[3px] pt-[3px] text-[13px] text-[#777]">mm²</span>
          <span className="h-full flex-1 bg-[#f4fafd]" />
        </div>
      </div>
    </main>
  );
}

/* ---------- status bar ---------- */

function StatusBar() {
  return (
    <footer className="flex h-[43px] items-stretch border-t-2 border-[#97999c] bg-[#eef0f2]">
      <div className="flex items-end gap-1 pb-1 pl-[6px]">
        <button type="button" aria-label="导航器" className="flex h-[22px] w-[22px] items-center justify-center border border-[#a0a3a6] bg-[#e6e8ea]">
          <TreeGlyph w={12} h={17} />
        </button>
        <button type="button" aria-label="浏览器" className="flex h-[22px] w-[22px] items-center justify-center border border-[#cfd2d5] bg-[#f8f9fa]">
          <Ico w={18}>
            <circle cx="9" cy="9" r="7" fill="#3d9bd2" />
            <path d="M5 5Q9 3 10 6T7 11ZM12 9L15 8L13 13Z" fill="#c8ecfa" />
            <ellipse cx="9" cy="9" rx="9" ry="3.500" transform="rotate(-42 9 9)" stroke="#4d86ab" />
          </Ico>
        </button>
      </div>
      <p className="ml-[10px] flex items-center self-start border-l border-[#d8dadc] pt-[7px] pl-[2px] text-[13px] text-[#444]">
        <Ico w={13} h={14}>
          <path d="M1 5H6V1.500L12 7L6 12.500V9H1Z" fill="#3fa3cc" stroke="#17506c" />
        </Ico>
        <span className="font-['Open_Sans','Noto_Sans_CJK_SC',sans-serif]">为测量 面积 分析选择参考</span>
      </p>
      <div className="ml-auto flex items-center font-['Liberation_Mono','Noto_Sans_CJK_SC',monospace] text-[15px] text-[#4a4b4d]">
        <span className="h-9 w-px bg-[#d0d3d6]" />
        <span className="ml-[29px] h-9 w-px bg-[#d0d3d6]" />
        <span className="flex w-[36px] justify-center">
          <Ico w={26} h={12}>
            <circle cx="6" cy="6" r="5.500" fill="#bdbfc1" />
            <circle cx="15" cy="6" r="3" fill="#d8dadc" />
            <circle cx="22.500" cy="6" r="3" fill="#d8dadc" />
          </Ico>
        </span>
        <span className="h-9 w-px bg-[#d0d3d6]" />
        <span className="ml-[5px]">
          <Ico w={13} h={16}>
            <path d="M1 0V16" stroke="#a4a6a8" strokeWidth="1.500" />
            <path d="M2 0L12 5L2 9Z" fill="#b0b2b4" />
          </Ico>
        </span>
        <span className="ml-[20px] h-9 w-px bg-[#d0d3d6]" />
        <button type="button" aria-label="查找" className="ml-[3px] flex h-[34px] w-10 items-center justify-center rounded-sm border border-[#b4b7ba] bg-linear-to-b from-[#fbfbfb] to-[#e4e6e8]">
          <Ico w={18} h={16}>
            <path d="M3 2L7 1L8 5V15H1V9ZM15 2L11 1L10 5V15H17V9Z" fill="#444" />
            <rect x="7" y="5" width="4" height="5" fill="#222" />
            <path d="M3 6V14M12 6V14" stroke="#999" />
          </Ico>
        </button>
        <output className="ml-[7px] w-[123px] pt-1 whitespace-nowrap">选择了 1 项</output>
        <label className="relative mr-[18px] flex">
          <span className="sr-only">选择过滤器</span>
          <select defaultValue="全部" className="h-[22px] w-[224px] appearance-none border border-[#c6cacd] bg-white pl-[7px] text-[15px] leading-5 text-[#4a4b4d]">
            <option>全部</option>
            <option>特征</option>
            <option>几何</option>
            <option>基准</option>
          </select>
          <span className="pointer-events-none absolute top-0 right-0 flex h-full w-[15px] items-center justify-center border-l border-[#c6cacd]">
            <Caret />
          </span>
        </label>
      </div>
    </footer>
  );
}

function Watermark() {
  return (
    <div className="pointer-events-none absolute right-[5px] bottom-0 h-[64px] w-[206px] bg-white/35">
      <svg width="60" height="64" viewBox="0 0 60 64" fill="none" className="absolute top-0 left-0" aria-hidden="true">
        <path d="M42 37C40 22 22 3 9 6C-2 10 6 28 20 35" stroke="#1b2f5c" strokeWidth="3.500" strokeOpacity="0.85" />
        <path d="M42 37C40 42 36 42 34 40C25 31 12 34 11 42C10 48 14 51 19 51" stroke="#b9c0cb" strokeWidth="2" />
        <path d="M38 24C52 18 60 28 54 42C50 54 42 59 34 58" stroke="#dc8f95" strokeWidth="4" />
        <path d="M34 58L28 53" stroke="#dc8f95" strokeWidth="3" />
      </svg>
      <div className="absolute top-0 right-0 flex flex-col items-end pr-[5px] mix-blend-multiply">
        <span className="pr-3 font-['Noto_Sans_CJK_SC',sans-serif] text-[29px] leading-[38px] font-black text-[#4fb684]">野火论坛</span>
        <span className="font-['Open_Sans',sans-serif] text-[15px] leading-5 text-[#bcdccb]">www.proewildfire.cn</span>
      </div>
    </div>
  );
}

export default function App() {
  return (
    <div className="relative flex min-h-screen flex-col overflow-hidden border-t-2 border-b-3 border-l-3 border-[#97999c] bg-[#fcfcfc] font-['Noto_Sans_CJK_SC','Liberation_Sans',sans-serif] select-none">
      <TitleBar />
      <TabBar />
      <Ribbon />
      <div className="flex flex-1 pr-1">
        <Sidebar />
        <Viewport />
      </div>
      <StatusBar />
      <Watermark />
    </div>
  );
}
